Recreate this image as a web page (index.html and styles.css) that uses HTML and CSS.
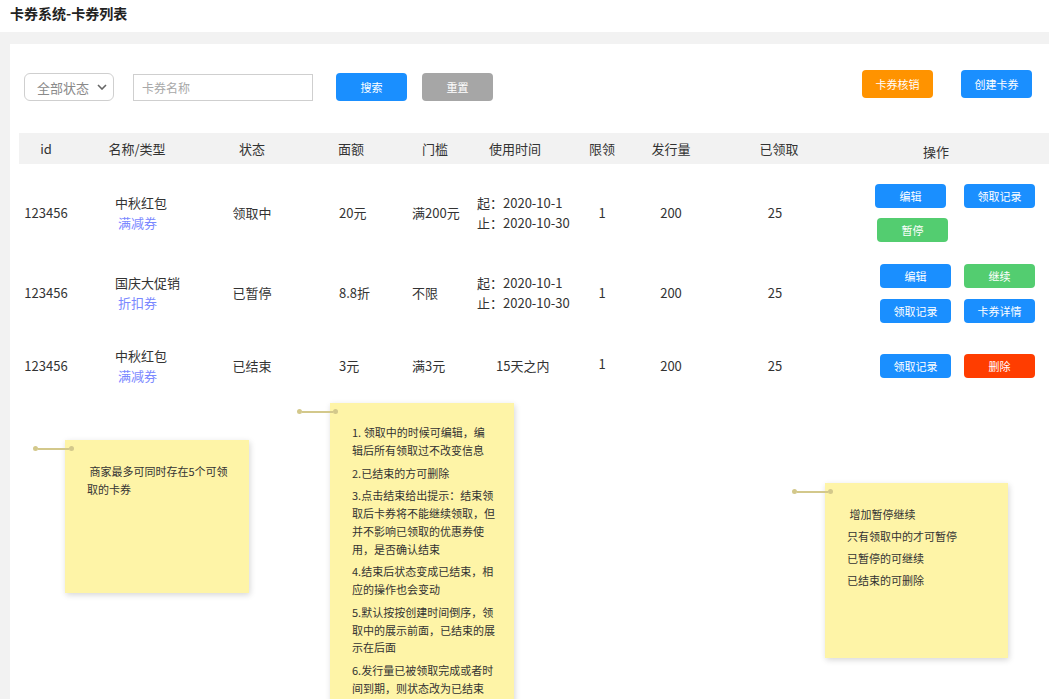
FILE: index.html
```html
<!DOCTYPE html>
<html lang="zh-CN">
<head>
<meta charset="utf-8">
<title>卡券系统-卡券列表</title>
<link rel="stylesheet" href="styles.css">
</head>
<body>
<header class="topbar"><h1 class="title">卡券系统-卡券列表</h1></header>
<main class="main">
  <section class="panel">
    <div class="filters">
      <div class="filters-left">
        <div class="select"><span>全部状态</span><svg class="chev" width="10" height="6" viewBox="0 0 10 6"><path d="M1 1 L5 5 L9 1" fill="none" stroke="#666" stroke-width="1.6"/></svg></div>
        <input class="search-input" type="text" placeholder="卡券名称">
        <button class="btn btn-lg btn-blue search">搜索</button>
        <button class="btn btn-lg btn-gray reset">重置</button>
      </div>
      <div class="filters-right">
        <button class="btn btn-lg btn-orange">卡券核销</button>
        <button class="btn btn-lg btn-blue create">创建卡券</button>
      </div>
    </div>

    <div class="table">
      <div class="grid thead">
        <div class="th">id</div>
        <div class="th">名称/类型</div>
        <div class="th">状态</div>
        <div class="th">面额</div>
        <div class="th">门槛</div>
        <div class="th">使用时间</div>
        <div class="th">限领</div>
        <div class="th">发行量</div>
        <div class="th">已领取</div>
        <div class="th th-ops">操作</div>
      </div>

      <div class="grid row r1">
        <div class="c-id">123456</div>
        <div class="c-name"><div>中秋红包</div><div class="type">满减券</div></div>
        <div class="c-status">领取中</div>
        <div class="c-face">20元</div>
        <div class="c-thr">满200元</div>
        <div class="c-time"><div>起：2020-10-1</div><div>止：2020-10-30</div></div>
        <div class="c-limit">1</div>
        <div class="c-issued">200</div>
        <div class="c-recv">25</div>
        <div class="c-ops ops-first">
          <button class="btn btn-blue">编辑</button>
          <button class="btn btn-blue">领取记录</button>
          <button class="btn btn-green pause">暂停</button>
        </div>
      </div>

      <div class="grid row r2">
        <div class="c-id">123456</div>
        <div class="c-name"><div>国庆大促销</div><div class="type">折扣券</div></div>
        <div class="c-status">已暂停</div>
        <div class="c-face">8.8折</div>
        <div class="c-thr">不限</div>
        <div class="c-time"><div>起：2020-10-1</div><div>止：2020-10-30</div></div>
        <div class="c-limit">1</div>
        <div class="c-issued">200</div>
        <div class="c-recv">25</div>
        <div class="c-ops">
          <button class="btn btn-blue">编辑</button>
          <button class="btn btn-green">继续</button>
          <button class="btn btn-blue">领取记录</button>
          <button class="btn btn-blue">卡券详情</button>
        </div>
      </div>

      <div class="grid row r3">
        <div class="c-id">123456</div>
        <div class="c-name"><div>中秋红包</div><div class="type">满减券</div></div>
        <div class="c-status">已结束</div>
        <div class="c-face">3元</div>
        <div class="c-thr">满3元</div>
        <div class="c-time c-time-rel">15天之内</div>
        <div class="c-limit c-limit-up">1</div>
        <div class="c-issued">200</div>
        <div class="c-recv">25</div>
        <div class="c-ops">
          <button class="btn btn-blue">领取记录</button>
          <button class="btn btn-red">删除</button>
        </div>
      </div>
    </div>
  </section>
</main>

<div class="notes">
  <div class="pin" style="left:33px;top:446px;"><span class="dot"></span><span class="line"></span><span class="dot"></span></div>
  <div class="note note-1" style="left:65px;top:440px;width:184px;height:153px;">
    <p>&nbsp;商家最多可同时存在5个可领<br>取的卡券</p>
  </div>

  <div class="pin" style="left:297px;top:409px;"><span class="dot"></span><span class="line"></span><span class="dot"></span></div>
  <div class="note note-2" style="left:330px;top:403px;width:184px;height:330px;">
    <p>1. 领取中的时候可编辑，编<br>辑后所有领取过不改变信息</p>
    <p>2.已结束的方可删除</p>
    <p>3.点击结束给出提示：结束领<br>取后卡券将不能继续领取，但<br>并不影响已领取的优惠券使<br>用，是否确认结束</p>
    <p>4.结束后状态变成已结束，相<br>应的操作也会变动</p>
    <p>5.默认按按创建时间倒序，领<br>取中的展示前面，已结束的展<br>示在后面</p>
    <p>6.发行量已被领取完成或者时<br>间到期，则状态改为已结束</p>
  </div>

  <div class="pin" style="left:792px;top:489px;"><span class="dot"></span><span class="line"></span><span class="dot"></span></div>
  <div class="note note-3" style="left:825px;top:483px;width:183px;height:175px;">
    <p>&nbsp;增加暂停继续</p>
    <p>只有领取中的才可暂停</p>
    <p>已暂停的可继续</p>
    <p>已结束的可删除</p>
  </div>
</div>
</body>
</html>
```

FILE: styles.css
```css
* { box-sizing: border-box; }
html, body {
  margin: 0;
  padding: 0;
  height: 100%;
  overflow: hidden;
}
body {
  position: relative;
  display: flex;
  flex-direction: column;
  font-family: "Noto Sans CJK SC", "Noto Sans", sans-serif;
  color: #333;
  background: #fff;
}

/* top bar */
.topbar {
  height: 32px;
  padding-left: 10px;
  background: #fff;
  flex: none;
}
.title {
  margin: 0;
  font-size: 14px;
  font-weight: bold;
  line-height: 27px;
  color: #222;
}

/* main area */
.main {
  flex: 1;
  display: flex;
  background: #f2f2f2;
  padding: 12px 0 0 10px;
}
.panel {
  flex: 1;
  background: #fff;
  padding: 26px 0 0 9px;
}

/* filters */
.filters {
  display: flex;
  justify-content: space-between;
  height: 31px;
  padding-left: 5px;
  padding-right: 17px;
}
.filters-left {
  display: flex;
  align-items: flex-end;
}
.filters-right {
  display: flex;
  align-items: flex-start;
}
.select {
  width: 90px;
  height: 28px;
  border: 1px solid #cfcfcf;
  border-radius: 6px;
  display: flex;
  align-items: center;
  justify-content: space-between;
  padding: 0 6px 0 12px;
  font-size: 13px;
  color: #8a8a8a;
}
.chev { display: block; }
.search-input {
  width: 180px;
  height: 27px;
  margin: 0 0 0 19px;
  border: 1px solid #cfcfcf;
  border-radius: 0;
  padding: 0 0 0 8px;
  font-family: inherit;
  font-size: 12px;
  color: #333;
  outline: none;
}
.search-input::placeholder { color: #a8a8a8; }

.btn {
  display: block;
  width: 71px;
  height: 24px;
  padding: 0;
  border: none;
  border-radius: 4px;
  font-family: inherit;
  font-size: 11px;
  line-height: 24px;
  color: #fff;
  text-align: center;
  white-space: nowrap;
}
.btn-lg { height: 28px; line-height: 28px; }
.search { margin-left: 23px; }
.reset { margin-left: 15px; }
.create { margin-left: 28px; }
.btn-blue { background: #1a8fff; }
.btn-gray { background: #a6a6a6; }
.btn-orange { background: #ff9300; }
.btn-green { background: #53cd70; }
.btn-red { background: #ff3d00; }

/* table */
.table {
  margin-top: 32px;
  font-size: 13px;
}
.grid {
  display: grid;
  grid-template-columns: 54px 128px 102px 96px 72px 88px 86px 52px 164px 1fr;
}
.thead {
  height: 31px;
  background: #f2f2f2;
  line-height: 31px;
}
.th { text-align: center; color: #333; }
.th-ops {
  text-align: left;
  padding-left: 62px;
  padding-top: 3px;
}
.row {
  align-items: center;
  line-height: 20px;
  white-space: nowrap;
}
.r1 { height: 98px; }
.r2 { height: 62px; }
.r3 { height: 84px; }

.c-id { text-align: center; }
.c-name { padding-left: 42px; }
.type { padding-left: 3px; color: #7a88ff; }
.c-status { text-align: center; }
.c-face { padding-left: 36px; }
.c-thr { padding-left: 13px; }
.c-time { padding-left: 6px; }
.c-time-rel { padding-left: 25px; }
.c-limit { text-align: center; }
.c-limit-up { margin-top: -5px; }
.c-issued { text-align: center; }
.c-recv { text-align: center; padding-right: 8px; }
.c-ops {
  display: grid;
  grid-template-columns: 71px 71px;
  column-gap: 13px;
  row-gap: 11px;
  padding-left: 19px;
}
.ops-first {
  column-gap: 18px;
  row-gap: 10px;
  padding-left: 14px;
}
.pause { margin-left: 2px; }

/* sticky notes */
.notes {
  position: absolute;
  inset: 0;
  pointer-events: none;
}
.note {
  position: absolute;
  background: #fef4a7;
  box-shadow: 1px 2px 6px rgba(0, 0, 0, 0.16);
  font-size: 11px;
  color: #333;
  padding-left: 22px;
}
.note p { margin: 0; white-space: nowrap; }
.note-1 { padding-top: 22px; line-height: 18px; }
.note-2 { padding-top: 21px; line-height: 17.7px; }
.note-2 p { margin-bottom: 5.2px; }
.note-3 { padding-top: 20px; line-height: 22px; }

.pin {
  position: absolute;
  display: flex;
  align-items: center;
  height: 5px;
  z-index: 2;
}
.dot {
  width: 5px;
  height: 5px;
  border-radius: 50%;
  background: #d3c88b;
}
.line {
  width: 31px;
  height: 2px;
  background: #d3c88b;
}
```
